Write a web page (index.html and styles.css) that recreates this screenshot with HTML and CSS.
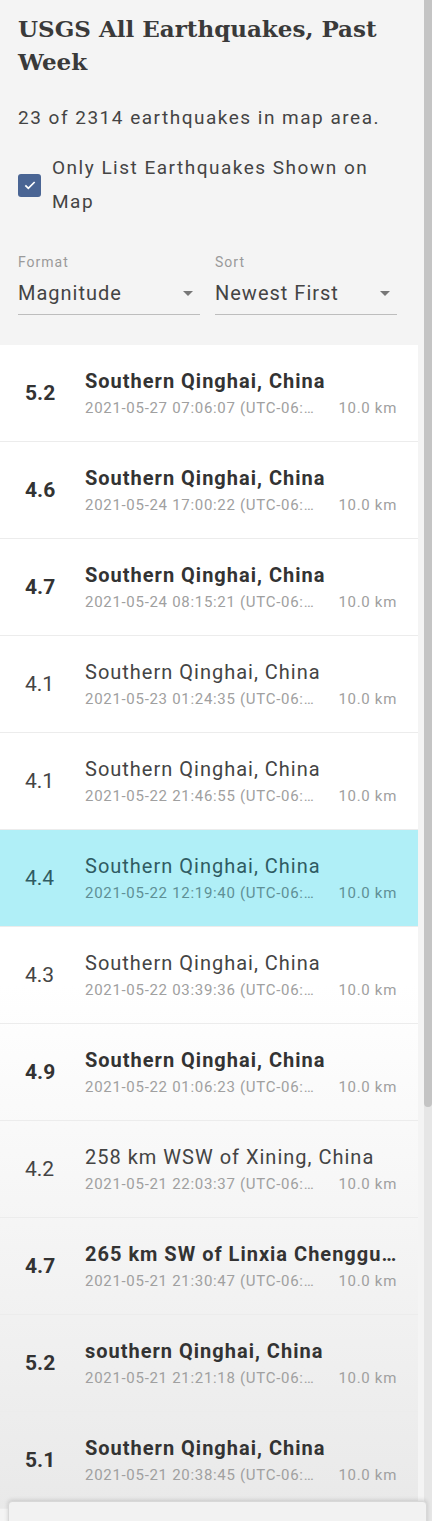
FILE: index.html
```html
<!DOCTYPE html>
<html lang="en">
<head>
    <meta charset="UTF-8">
    <meta name="viewport" content="width=device-width, initial-scale=1.0">
    <title>USGS All Earthquakes, Past Week</title>
    <link rel="stylesheet" href="styles.css">
</head>
<body>
    <div class="app">
        <aside class="panel">
            <header class="panel-header">
                <h1>USGS All Earthquakes, Past Week</h1>
                <p class="summary">23 of 2314 earthquakes in map area.</p>
                <label class="map-filter">
                    <span class="checkbox" aria-hidden="true">
                        <svg viewBox="0 0 24 24" width="16" height="16"><path d="M5 12.5l4.5 4.5L19 7.5" fill="none" stroke="#fff" stroke-width="2.6"/></svg>
                    </span>
                    <span class="map-filter-text">Only List Earthquakes Shown on Map</span>
                </label>
                <div class="selects">
                    <div class="field">
                        <span class="field-label">Format</span>
                        <div class="select">Magnitude<span class="caret"></span></div>
                    </div>
                    <div class="field">
                        <span class="field-label">Sort</span>
                        <div class="select">Newest First<span class="caret"></span></div>
                    </div>
                </div>
            </header>

            <ul class="quake-list">
                <li class="quake big">
                    <span class="mag">5.2</span>
                    <div class="info">
                        <div class="place">Southern Qinghai, China</div>
                        <div class="meta"><span class="time">2021-05-27 07:06:07 (UTC-06:00)</span><span class="depth">10.0 km</span></div>
                    </div>
                </li>
                <li class="quake big">
                    <span class="mag">4.6</span>
                    <div class="info">
                        <div class="place">Southern Qinghai, China</div>
                        <div class="meta"><span class="time">2021-05-24 17:00:22 (UTC-06:00)</span><span class="depth">10.0 km</span></div>
                    </div>
                </li>
                <li class="quake big">
                    <span class="mag">4.7</span>
                    <div class="info">
                        <div class="place">Southern Qinghai, China</div>
                        <div class="meta"><span class="time">2021-05-24 08:15:21 (UTC-06:00)</span><span class="depth">10.0 km</span></div>
                    </div>
                </li>
                <li class="quake">
                    <span class="mag">4.1</span>
                    <div class="info">
                        <div class="place">Southern Qinghai, China</div>
                        <div class="meta"><span class="time">2021-05-23 01:24:35 (UTC-06:00)</span><span class="depth">10.0 km</span></div>
                    </div>
                </li>
                <li class="quake">
                    <span class="mag">4.1</span>
                    <div class="info">
                        <div class="place">Southern Qinghai, China</div>
                        <div class="meta"><span class="time">2021-05-22 21:46:55 (UTC-06:00)</span><span class="depth">10.0 km</span></div>
                    </div>
                </li>
                <li class="quake selected">
                    <span class="mag">4.4</span>
                    <div class="info">
                        <div class="place">Southern Qinghai, China</div>
                        <div class="meta"><span class="time">2021-05-22 12:19:40 (UTC-06:00)</span><span class="depth">10.0 km</span></div>
                    </div>
                </li>
                <li class="quake">
                    <span class="mag">4.3</span>
                    <div class="info">
                        <div class="place">Southern Qinghai, China</div>
                        <div class="meta"><span class="time">2021-05-22 03:39:36 (UTC-06:00)</span><span class="depth">10.0 km</span></div>
                    </div>
                </li>
                <li class="quake big">
                    <span class="mag">4.9</span>
                    <div class="info">
                        <div class="place">Southern Qinghai, China</div>
                        <div class="meta"><span class="time">2021-05-22 01:06:23 (UTC-06:00)</span><span class="depth">10.0 km</span></div>
                    </div>
                </li>
                <li class="quake">
                    <span class="mag">4.2</span>
                    <div class="info">
                        <div class="place">258 km WSW of Xining, China</div>
                        <div class="meta"><span class="time">2021-05-21 22:03:37 (UTC-06:00)</span><span class="depth">10.0 km</span></div>
                    </div>
                </li>
                <li class="quake big">
                    <span class="mag">4.7</span>
                    <div class="info">
                        <div class="place">265 km SW of Linxia Chengguanzhen, China</div>
                        <div class="meta"><span class="time">2021-05-21 21:30:47 (UTC-06:00)</span><span class="depth">10.0 km</span></div>
                    </div>
                </li>
                <li class="quake big">
                    <span class="mag">5.2</span>
                    <div class="info">
                        <div class="place">southern Qinghai, China</div>
                        <div class="meta"><span class="time">2021-05-21 21:21:18 (UTC-06:00)</span><span class="depth">10.0 km</span></div>
                    </div>
                </li>
                <li class="quake big">
                    <span class="mag">5.1</span>
                    <div class="info">
                        <div class="place">Southern Qinghai, China</div>
                        <div class="meta"><span class="time">2021-05-21 20:38:45 (UTC-06:00)</span><span class="depth">10.0 km</span></div>
                    </div>
                </li>
            </ul>
        </aside>
        <div class="scrollbar"><div class="thumb"></div></div>
        <div class="bottom-sheet"></div>
    </div>
</body>
</html>
```

FILE: styles.css
```css
body {
    margin: 0;
    font-family: Roboto, "Liberation Sans", sans-serif;
    color: #333;
    background-color: #f4f4f4;
}

.app {
    position: relative;
    display: flex;
    height: 1521px;
    overflow: hidden;
}

.panel {
    width: 424px;
    background-color: #f4f4f4;
}

.panel-header {
    padding: 12px 21px 30px 18px;
    margin-right: 6px;
}

h1 {
    margin: 0;
    font-family: "DejaVu Serif", "Liberation Serif", serif;
    font-size: 23px;
    line-height: 33px;
    font-weight: bold;
    color: #3a3a3a;
}

.summary {
    margin: 29px 0 0;
    font-size: 19px;
    line-height: 22px;
    letter-spacing: 1.5px;
    color: #444;
}

.map-filter {
    display: flex;
    align-items: center;
    margin-top: 22px;
}

.checkbox {
    flex: none;
    display: flex;
    align-items: center;
    justify-content: center;
    width: 23px;
    height: 23px;
    margin-right: 11px;
    border-radius: 3px;
    background-color: #4a6594;
}

.map-filter-text {
    font-size: 19px;
    line-height: 34px;
    letter-spacing: 1.5px;
    color: #444;
}

.selects {
    display: flex;
    gap: 15px;
    margin-top: 36px;
}

.field {
    flex: 1;
}

.field-label {
    display: block;
    font-size: 14px;
    line-height: 14px;
    letter-spacing: 1px;
    color: #9a9a9a;
}

.select {
    display: flex;
    align-items: center;
    justify-content: space-between;
    margin-top: 10px;
    padding-bottom: 7px;
    font-size: 20px;
    line-height: 28px;
    letter-spacing: 1px;
    color: #444;
    border-bottom: 1px solid #bdbdbd;
}

.caret {
    width: 0;
    height: 0;
    margin-right: 7px;
    border-left: 5px solid transparent;
    border-right: 5px solid transparent;
    border-top: 5px solid #777;
}

.quake-list {
    list-style: none;
    margin: 0 6px 0 0;
    padding: 0;
    background: linear-gradient(to bottom, #fff 0, #fff 55%, #e9e9e9 100%);
}

.quake {
    display: flex;
    align-items: center;
    height: 96px;
    padding: 0 21px 0 25px;
    border-bottom: 1px solid #ececec;
}

.mag {
    width: 60px;
    flex: none;
    font-size: 21px;
    color: #444;
}

.info {
    flex: 1;
    min-width: 0;
}

.place {
    font-size: 20px;
    line-height: 24px;
    letter-spacing: 1px;
    color: #444;
    white-space: nowrap;
    overflow: hidden;
    text-overflow: ellipsis;
}

.big .mag,
.big .place {
    font-weight: bold;
    color: #333;
}

.meta {
    display: flex;
    margin-top: 6px;
    font-size: 15px;
    line-height: 18px;
    letter-spacing: 0.7px;
    color: #a0a0a0;
}

.time {
    flex: 1;
    min-width: 0;
    white-space: nowrap;
    overflow: hidden;
    text-overflow: ellipsis;
}

.depth {
    flex: none;
    margin-left: 20px;
}

.quake.selected {
    background-color: #b0eff7;
}

.selected .mag,
.selected .place {
    color: #2f5b62;
}

.selected .meta {
    color: #5f8f96;
}

.scrollbar {
    width: 8px;
    flex: none;
    background-color: #e6e6e6;
}

.thumb {
    height: 1107px;
    background-color: #c4c4c4;
    border-radius: 0 0 4px 4px;
}

.bottom-sheet {
    position: absolute;
    left: 8px;
    right: 5px;
    top: 1501px;
    height: 40px;
    background-color: #f2f2f2;
    border: 1px solid #d8d8d8;
    border-radius: 4px;
    box-shadow: 0 -1px 4px rgba(0, 0, 0, 0.15);
}
```
